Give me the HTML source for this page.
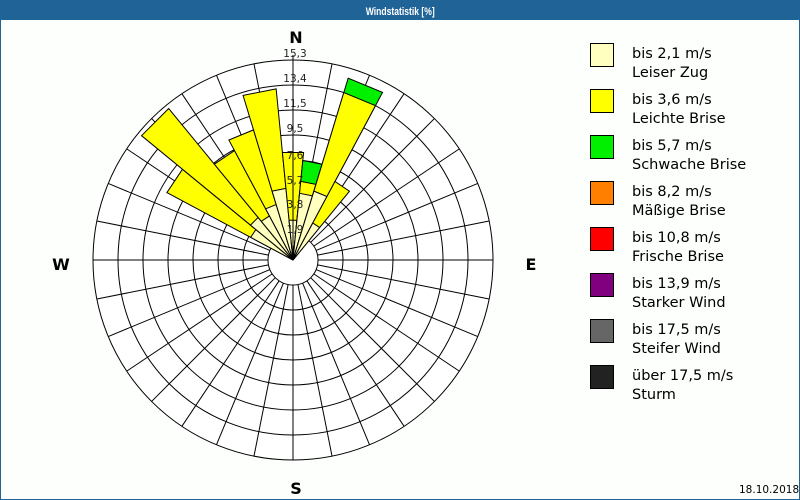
<!DOCTYPE html>
<html><head><meta charset="utf-8"><style>
html,body{margin:0;padding:0}
body{width:800px;height:500px;position:relative;background:#fcfffc;overflow:hidden;font-family:"DejaVu Sans","Liberation Sans",sans-serif}
.frame{position:absolute;left:0;top:0;width:798px;height:498px;border:1px solid #1f6397}
.title{position:absolute;left:0;top:0;width:800px;height:20px;background:#1f6397;color:#fff;text-align:center;line-height:20px}
.title span{display:inline-block;font:bold 11px "Liberation Sans",sans-serif;transform:scaleX(0.78)}
.box{position:absolute;left:590px;width:22px;height:22px;border:1px solid #000}
.lt{position:absolute;left:632px;font-size:14.5px;line-height:19px;color:#000;white-space:nowrap}
.date{position:absolute;left:739px;top:484px;font-size:10.5px}
</style></head><body>
<div class="frame"></div>
<div class="title"><span>Windstatistik [%]</span></div>
<svg width="800" height="500" style="position:absolute;left:0;top:0">
<g transform="translate(293,260)" stroke="#000" stroke-width="1" fill="none">
<circle r="200" fill="#fff"/>
<circle r="175"/><circle r="150"/><circle r="125"/><circle r="100"/><circle r="75"/><circle r="50"/>
<g id="sp"><line x1="0" y1="-25" x2="0" y2="-200"/></g>
<use href="#sp" transform="rotate(11.25)"/><use href="#sp" transform="rotate(22.5)"/><use href="#sp" transform="rotate(33.75)"/>
<use href="#sp" transform="rotate(45)"/><use href="#sp" transform="rotate(56.25)"/><use href="#sp" transform="rotate(67.5)"/><use href="#sp" transform="rotate(78.75)"/>
<use href="#sp" transform="rotate(90)"/><use href="#sp" transform="rotate(101.25)"/><use href="#sp" transform="rotate(112.5)"/><use href="#sp" transform="rotate(123.75)"/>
<use href="#sp" transform="rotate(135)"/><use href="#sp" transform="rotate(146.25)"/><use href="#sp" transform="rotate(157.5)"/><use href="#sp" transform="rotate(168.75)"/>
<use href="#sp" transform="rotate(180)"/><use href="#sp" transform="rotate(191.25)"/><use href="#sp" transform="rotate(202.5)"/><use href="#sp" transform="rotate(213.75)"/>
<use href="#sp" transform="rotate(225)"/><use href="#sp" transform="rotate(236.25)"/><use href="#sp" transform="rotate(247.5)"/><use href="#sp" transform="rotate(258.75)"/>
<use href="#sp" transform="rotate(270)"/><use href="#sp" transform="rotate(281.25)"/><use href="#sp" transform="rotate(292.5)"/><use href="#sp" transform="rotate(303.75)"/>
<use href="#sp" transform="rotate(315)"/><use href="#sp" transform="rotate(326.25)"/><use href="#sp" transform="rotate(337.5)"/><use href="#sp" transform="rotate(348.75)"/>
<circle r="25" fill="#fff"/>
<line x1="0" y1="-200" x2="0" y2="-205"/>
<g transform="rotate(-56.25)"><path d="M0 0L-14.01 -142.31L14.01 -142.31Z" fill="#ff0"/><path d="M0 0L-4.7 -47.77L4.7 -47.77Z" fill="#ffffc0"/></g>
<g transform="rotate(-45)"><path d="M0 0L-19.2 -195L19.2 -195Z" fill="#ff0"/><path d="M0 0L-5.39 -54.74L5.39 -54.74Z" fill="#ffffc0"/></g>
<g transform="rotate(-33.75)"><path d="M0 0L-12.15 -123.4L12.15 -123.4Z" fill="#ff0"/><path d="M0 0L-4.9 -49.76L4.9 -49.76Z" fill="#ffffc0"/></g>
<g transform="rotate(-22.5)"><path d="M0 0L-13.33 -135.35L13.33 -135.35Z" fill="#ff0"/><path d="M0 0L-5.68 -57.72L5.68 -57.72Z" fill="#ffffc0"/></g>
<g transform="rotate(-11.25)"><path d="M0 0L-16.86 -171.17L16.86 -171.17Z" fill="#ff0"/><path d="M0 0L-7.06 -71.65L7.06 -71.65Z" fill="#ffffc0"/></g>
<g><path d="M0 0L-10.58 -107.48L10.58 -107.48Z" fill="#ff0"/><path d="M0 0L-3.92 -39.81L3.92 -39.81Z" fill="#ffffc0"/></g>
<g transform="rotate(11.25)"><path d="M0 0L-9.8 -99.52L9.8 -99.52Z" fill="#00f000"/><path d="M0 0L-7.74 -78.62L7.74 -78.62Z" fill="#ff0"/><path d="M0 0L-6.57 -66.68L6.57 -66.68Z" fill="#ffffc0"/></g>
<g transform="rotate(22.5)"><path d="M0 0L-18.62 -189.09L18.62 -189.09Z" fill="#00f000"/><path d="M0 0L-17.15 -174.16L17.15 -174.16Z" fill="#ff0"/><path d="M0 0L-7.06 -71.65L7.06 -71.65Z" fill="#ffffc0"/></g>
<g transform="rotate(33.75)"><path d="M0 0L-8.72 -88.57L8.72 -88.57Z" fill="#ff0"/><path d="M0 0L-4.12 -41.8L4.12 -41.8Z" fill="#ffffc0"/></g>
<line x1="0" y1="0" x2="0" y2="-200"/>
</g>
<g font-family="DejaVu Sans, sans-serif" font-size="10.5" fill="#222" text-anchor="middle">
<text x="295" y="57">15,3</text><text x="295" y="82">13,4</text><text x="295" y="107">11,5</text><text x="295" y="132">9,5</text>
<text x="295" y="159">7,6</text><text x="295" y="184">5,7</text><text x="295" y="208">3,8</text><text x="295" y="233">1,9</text>
</g>
<g font-family="DejaVu Sans, sans-serif" font-size="16" font-weight="bold" fill="#000" text-anchor="middle">
<text x="296" y="43">N</text><text x="61" y="270">W</text><text x="531" y="270">E</text><text x="296" y="494">S</text>
</g>
</svg>
<div class="box" style="top:43px;background:#ffffc0"></div>
<div class="box" style="top:89px;background:#ff0"></div>
<div class="box" style="top:135px;background:#00f000"></div>
<div class="box" style="top:181px;background:#ff8000"></div>
<div class="box" style="top:227px;background:#f00"></div>
<div class="box" style="top:273px;background:#800080"></div>
<div class="box" style="top:319px;background:#666"></div>
<div class="box" style="top:365px;background:#222"></div>
<div class="lt" style="top:45px">bis 2,1 m/s<br>Leiser Zug</div>
<div class="lt" style="top:91px">bis 3,6 m/s<br>Leichte Brise</div>
<div class="lt" style="top:137px">bis 5,7 m/s<br>Schwache Brise</div>
<div class="lt" style="top:183px">bis 8,2 m/s<br>Mäßige Brise</div>
<div class="lt" style="top:229px">bis 10,8 m/s<br>Frische Brise</div>
<div class="lt" style="top:275px">bis 13,9 m/s<br>Starker Wind</div>
<div class="lt" style="top:321px">bis 17,5 m/s<br>Steifer Wind</div>
<div class="lt" style="top:367px">über 17,5 m/s<br>Sturm</div>
<div class="date">18.10.2018</div>
</body></html>
